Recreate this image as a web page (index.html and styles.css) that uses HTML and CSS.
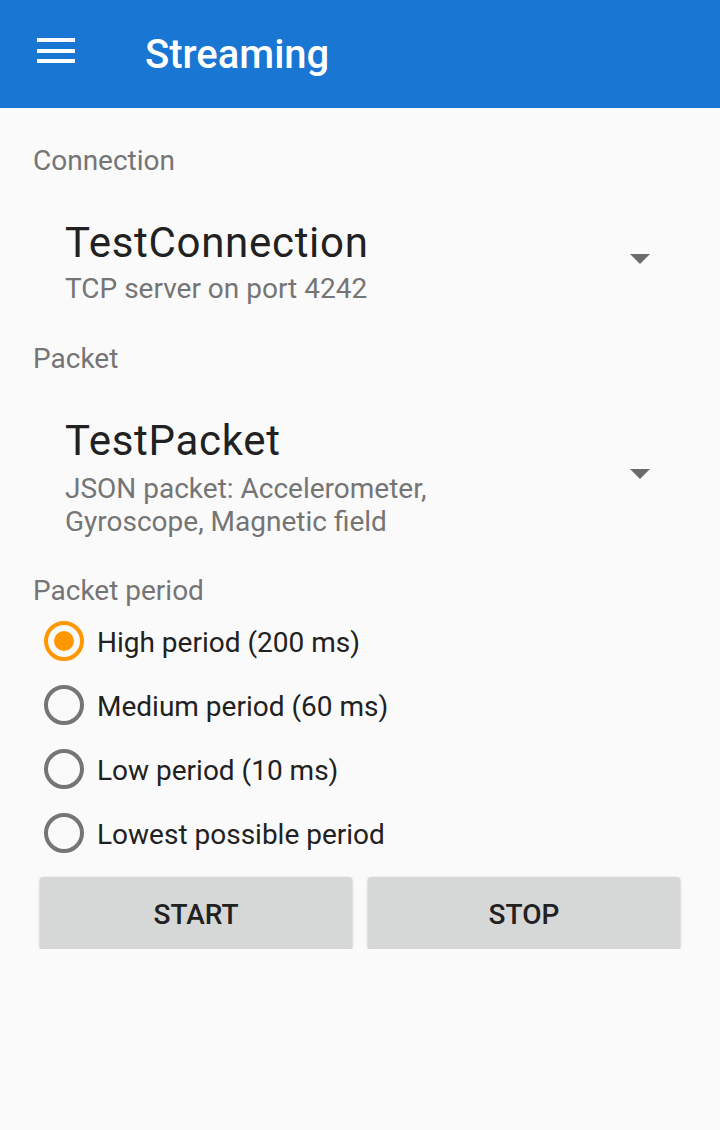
FILE: index.html
```html
<!DOCTYPE html>
<html lang="en">
<head>
<meta charset="utf-8">
<title>Streaming</title>
<link rel="stylesheet" href="styles.css">
</head>
<body>
<header class="toolbar">
  <svg class="menu-icon" width="38" height="26" viewBox="0 0 38 26" aria-hidden="true">
    <rect x="0" y="0" width="38" height="4" fill="#fff"/>
    <rect x="0" y="11" width="38" height="4" fill="#fff"/>
    <rect x="0" y="21" width="38" height="4" fill="#fff"/>
  </svg>
  <h1 class="toolbar-title">Streaming</h1>
</header>
<main class="content">
  <div class="label">Connection</div>
  <div class="spinner">
    <div class="spinner-text">
      <div class="spinner-title">TestConnection</div>
      <div class="spinner-sub">TCP server on port 4242</div>
    </div>
    <span class="spinner-arrow"></span>
  </div>

  <div class="label">Packet</div>
  <div class="spinner spinner-tall">
    <div class="spinner-text">
      <div class="spinner-title">TestPacket</div>
      <div class="spinner-sub">JSON packet: Accelerometer,<br>Gyroscope, Magnetic field</div>
    </div>
    <span class="spinner-arrow"></span>
  </div>

  <div class="label">Packet period</div>
  <div class="radio-group">
    <div class="radio-row"><span class="radio checked"></span><span class="radio-label">High period (200 ms)</span></div>
    <div class="radio-row"><span class="radio"></span><span class="radio-label">Medium period (60 ms)</span></div>
    <div class="radio-row"><span class="radio"></span><span class="radio-label">Low period (10 ms)</span></div>
    <div class="radio-row"><span class="radio"></span><span class="radio-label">Lowest possible period</span></div>
  </div>
</main>
<div class="buttons">
  <button class="btn">START</button>
  <button class="btn">STOP</button>
</div>
</body>
</html>
```

FILE: styles.css
```css
html, body {
  margin: 0;
  padding: 0;
  background: #fafafa;
  font-family: Roboto, "Noto Sans", "Liberation Sans", sans-serif;
}

.toolbar {
  height: 108px;
  background: #1976d2;
  display: flex;
  align-items: flex-start;
  box-sizing: border-box;
  padding-left: 37px;
}

.menu-icon {
  display: block;
  margin-top: 38px;
}

.toolbar-title {
  margin: 0 0 0 70px;
  font-size: 40px;
  font-weight: 500;
  line-height: 50px;
  padding-top: 30px;
  color: #fff;
}

.content {
  padding: 35px 33px 0 33px;
}

.label {
  font-size: 28px;
  line-height: 36px;
  color: #757575;
}

.spinner {
  display: flex;
  align-items: center;
  justify-content: space-between;
}

.spinner-text {
  padding: 39px 0 36px 32px;
}

.spinner-tall .spinner-text {
  padding-bottom: 35px;
}

.spinner-title {
  font-size: 42px;
  line-height: 50px;
  color: #212121;
  letter-spacing: 0.7px;
}

.spinner-sub {
  margin-top: 4px;
  font-size: 28px;
  line-height: 33px;
  color: #757575;
}

.spinner-tall .spinner-sub {
  margin-top: 6px;
}

.spinner-arrow {
  width: 0;
  height: 0;
  border-left: 10px solid transparent;
  border-right: 10px solid transparent;
  border-top: 10px solid #6b6b6b;
  margin: 0 37px 2px 0;
}

.radio-group {
  padding-left: 11px;
}

.radio-row {
  display: flex;
  align-items: center;
  height: 64px;
}

.radio {
  width: 40px;
  height: 40px;
  box-sizing: border-box;
  border: 4px solid #757575;
  border-radius: 50%;
  display: flex;
  align-items: center;
  justify-content: center;
  flex: none;
}

.radio.checked {
  border-color: #ff9800;
}

.radio.checked::after {
  content: "";
  width: 20px;
  height: 20px;
  border-radius: 50%;
  background: #ff9800;
}

.radio-label {
  margin-left: 13px;
  padding-top: 3px;
  font-size: 28px;
  line-height: 64px;
  color: #212121;
}

.buttons {
  display: flex;
  gap: 16px;
  padding: 12px 40px 0 40px;
}

.btn {
  flex: 1;
  height: 72px;
  border: none;
  border-radius: 3px;
  background: #d6d7d7;
  box-shadow: 0 2px 3px rgba(0, 0, 0, 0.22), 0 0 2px rgba(0, 0, 0, 0.10);
  font-family: Roboto, "Noto Sans", "Liberation Sans", sans-serif;
  font-size: 28px;
  font-weight: 500;
  color: #212121;
  padding: 3px 0 0 0;
}
```
